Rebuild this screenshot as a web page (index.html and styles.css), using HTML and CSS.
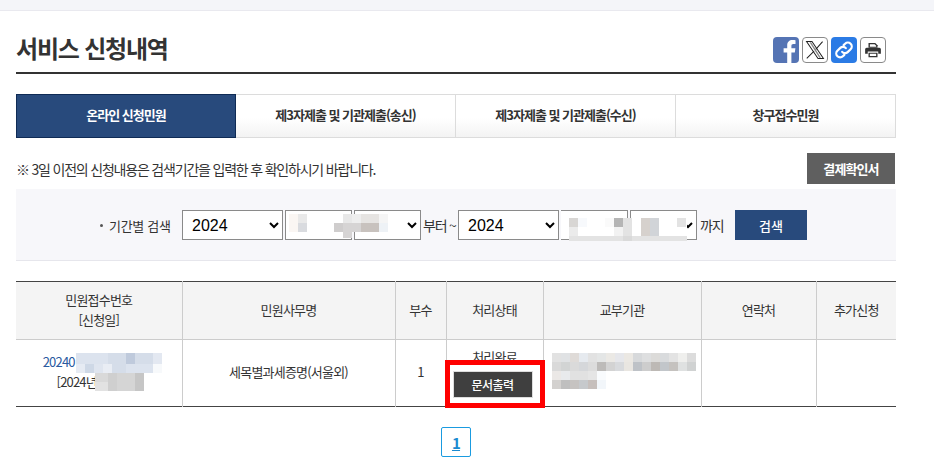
FILE: index.html
```html
<!DOCTYPE html>
<html lang="ko">
<head>
<meta charset="utf-8">
<title>서비스 신청내역</title>
<link rel="stylesheet" href="styles.css">
</head>
<body>
<div class="topstrip"></div>
<main class="page">
  <header class="head">
    <h1 class="title">서비스 신청내역</h1>
    <div class="share">
      <a class="sicon fb"><svg viewBox="0 0 26 26" width="26" height="26"><path d="M14.2 26V15.5h-3.6v-4.2h3.6V8.6c0-3.6 2.1-5.500 5.300-5.500 1.500 0 2.600.1 3 .2v3.700h-2c-1.700 0-2.100.8-2.100 2v2.300h4l-.6 4.200h-3.400V26z" fill="#fff"/></svg></a>
      <a class="sicon plain"><svg viewBox="0 0 24 24" width="22" height="22"><path d="M2.800 2.800h5.900l12.500 18.400h-5.900z" fill="none" stroke="#222" stroke-width="1.100"/><path d="M6 3.500h1.800l10.700 17h-1.800z" fill="#222" opacity=".55"/><path d="M20.300 2.800l-7.500 8.500M11 13.300L3 21.200" stroke="#222" stroke-width="1.100" fill="none"/></svg></a>
      <a class="sicon link"><svg viewBox="0 0 24 24" width="22" height="22" fill="none" stroke="#fff" stroke-width="2.400" stroke-linecap="round"><path d="M10 14a4 4 0 0 0 6 .3l3.200-3.200a4.200 4.200 0 0 0-6-6L11.600 6.700"/><path d="M14 10a4 4 0 0 0-6-.3l-3.200 3.200a4.200 4.200 0 0 0 6 6l1.600-1.600"/></svg></a>
      <a class="sicon plain"><svg viewBox="0 0 24 24" width="18" height="18"><path d="M6 2.500h9l3 3V9H6z" fill="#333"/><path d="M7.800 4.200h6.400l2 2v1.300H7.800z" fill="#fff"/><path d="M3.500 9h17a2 2 0 0 1 2 2v6H19v-3H5v3H1.500v-6a2 2 0 0 1 2-2z" fill="#333"/><path d="M6 15.500h12v6H6z" fill="#333"/><path d="M7.800 17h8.400v3H7.800z" fill="#fff"/></svg></a>
    </div>
  </header>

  <nav class="tabs">
    <a class="tab active">온라인 신청민원</a>
    <a class="tab">제3자제출 및 기관제출(송신)</a>
    <a class="tab">제3자제출 및 기관제출(수신)</a>
    <a class="tab">창구접수민원</a>
  </nav>

  <div class="notice-row">
    <p class="notice">※ 3일 이전의 신청내용은 검색기간을 입력한 후 확인하시기 바랍니다.</p>
    <button class="btn-gray">결제확인서</button>
  </div>

  <form class="search">
    <span class="search-label"><i class="dot"></i>기간별 검색</span>
    <select class="sel sel-year"><option>2024</option></select>
    <select class="sel sel-md"><option></option></select>
    <select class="sel sel-md"><option></option></select>
    <span class="search-text">부터 ~</span>
    <select class="sel sel-year"><option>2024</option></select>
    <select class="sel sel-md"><option></option></select>
    <select class="sel sel-md"><option></option></select>
    <span class="search-text until">까지</span>
    <button type="button" class="btn-search">검색</button>
  </form>

  <table class="grid">
    <colgroup>
      <col class="c1"><col class="c2"><col class="c3"><col class="c4"><col class="c5"><col class="c6"><col class="c7">
    </colgroup>
    <thead>
      <tr><th>민원접수번호<br>[신청일]</th><th>민원사무명</th><th>부수</th><th>처리상태</th><th>교부기관</th><th>연락처</th><th>추가신청</th></tr>
    </thead>
    <tbody>
      <tr>
        <td><a class="num">20240<span class="mask-num"></span></a><br>[2024년<span class="mask-date"></span></td>
        <td>세목별과세증명(서울외)</td>
        <td class="copies">1</td>
        <td class="status"><span class="status-text">처리완료</span><button class="btn-print">문서출력</button></td>
        <td></td><td></td><td></td>
      </tr>
    </tbody>
  </table>

  <div class="pager"><a class="page-on">1</a></div>
</main>

<div class="redbox"></div>

<svg class="mosaic" width="934" height="475" viewBox="0 0 934 475" shape-rendering="crispEdges">
  <!-- start month / day -->
  <rect x="286" y="211" width="65" height="28" fill="#fff"/>
  <rect x="289" y="214" width="9" height="18" fill="#faf6f3"/>
  <rect x="298" y="214" width="9" height="9" fill="#e9e9e9"/><rect x="298" y="223" width="9" height="9" fill="#d9dbdf"/>
  <rect x="334" y="223" width="9" height="9" fill="#cfcdcd"/>
  <rect x="343" y="214" width="9" height="9" fill="#e8e8e8"/><rect x="343" y="223" width="9" height="15" fill="#d6d4d4"/>
  <rect x="352" y="214" width="9" height="9" fill="#eeeeee"/><rect x="352" y="223" width="9" height="9" fill="#d6d4d4"/>
  <rect x="361" y="214" width="18" height="9" fill="#e6e4e2"/><rect x="361" y="223" width="18" height="9" fill="#c8c2be"/>
  <rect x="379" y="214" width="9" height="9" fill="#f5f5f5"/><rect x="379" y="223" width="9" height="9" fill="#eef2f6"/>
  <!-- end month / day -->
  <rect x="561" y="211" width="66" height="28" fill="#fff"/>
  <rect x="631" y="211" width="55" height="28" fill="#fff"/>
  <rect x="569" y="218" width="118" height="23" fill="#fff"/>
  <rect x="569" y="218" width="9" height="9" fill="#d8d6d4"/><rect x="569" y="227" width="9" height="9" fill="#ebebeb"/>
  <rect x="578" y="218" width="9" height="9" fill="#f7f9fc"/>
  <rect x="605" y="218" width="9" height="9" fill="#fafafa"/>
  <rect x="614" y="218" width="9" height="9" fill="#b5b5b5"/><rect x="614" y="227" width="9" height="9" fill="#f2f2f2"/>
  <rect x="623" y="218" width="9" height="18" fill="#e3e3e3"/>
  <rect x="641" y="218" width="9" height="18" fill="#d6d1cd"/>
  <rect x="650" y="218" width="9" height="18" fill="#d1d4d8"/>
  <rect x="677" y="218" width="9" height="9" fill="#e3e3e3"/>
  <rect x="569" y="236" width="118" height="5" fill="#e3e3e3"/>
  <rect x="623" y="236" width="9" height="5" fill="#dadada"/>
  <!-- receipt number -->
  <rect x="76" y="353" width="32" height="11" fill="#dce3ee"/>
  <rect x="108" y="353" width="18" height="11" fill="#d5dde9"/>
  <rect x="126" y="353" width="9" height="11" fill="#bfcadc"/>
  <rect x="135" y="353" width="18" height="11" fill="#d5dde9"/>
  <rect x="153" y="353" width="9" height="11" fill="#e3e8f1"/>
  <rect x="76" y="364" width="9" height="9" fill="#e6ebf3"/>
  <rect x="85" y="364" width="9" height="9" fill="#ced8e6"/>
  <rect x="94" y="364" width="9" height="9" fill="#dfe5ef"/>
  <rect x="103" y="364" width="9" height="9" fill="#e9edf4"/>
  <rect x="112" y="364" width="14" height="9" fill="#d5dde9"/>
  <rect x="126" y="364" width="27" height="9" fill="#dce3ee"/>
  <rect x="153" y="364" width="9" height="9" fill="#f7f9fb"/>
  <!-- date -->
  <rect x="95" y="373" width="13" height="9" fill="#d9d9d9"/><rect x="108" y="373" width="9" height="18" fill="#cfcfcf"/>
  <rect x="95" y="382" width="13" height="9" fill="#e2e2e2"/>
  <rect x="117" y="373" width="18" height="18" fill="#d5d5d5"/>
  <rect x="135" y="373" width="9" height="18" fill="#c6c6c6"/>
  <!-- issuing agency -->
  <rect x="552" y="353" width="9" height="9" fill="#e2e2e2"/><rect x="561" y="353" width="9" height="9" fill="#e0e2e4"/><rect x="570" y="353" width="9" height="9" fill="#dfdbd8"/><rect x="579" y="353" width="9" height="9" fill="#e6eaef"/><rect x="588" y="353" width="9" height="9" fill="#e2e2e2"/><rect x="597" y="353" width="9" height="9" fill="#e4e6e6"/><rect x="606" y="353" width="9" height="9" fill="#ebe9e5"/><rect x="615" y="353" width="9" height="9" fill="#e6e7eb"/><rect x="624" y="353" width="9" height="9" fill="#ebe8e3"/><rect x="633" y="353" width="9" height="9" fill="#d7d9db"/><rect x="642" y="353" width="9" height="9" fill="#dedfe0"/><rect x="651" y="353" width="9" height="9" fill="#dcdbd9"/><rect x="660" y="353" width="9" height="9" fill="#d9dbdd"/><rect x="669" y="353" width="9" height="9" fill="#e3e3e3"/><rect x="678" y="353" width="9" height="9" fill="#efefed"/><rect x="687" y="353" width="9" height="9" fill="#dcdcdc"/>
  <rect x="552" y="362" width="9" height="9" fill="#d9d9d9"/><rect x="561" y="362" width="9" height="9" fill="#d2d4d4"/><rect x="570" y="362" width="9" height="9" fill="#dadada"/><rect x="579" y="362" width="9" height="9" fill="#d5d7da"/><rect x="588" y="362" width="9" height="9" fill="#dcdcdc"/><rect x="597" y="362" width="9" height="9" fill="#bdbbb9"/><rect x="606" y="362" width="9" height="9" fill="#d3d3d3"/><rect x="615" y="362" width="9" height="9" fill="#d8dadd"/><rect x="624" y="362" width="9" height="9" fill="#e9e6e1"/><rect x="633" y="362" width="9" height="9" fill="#bec2c7"/><rect x="642" y="362" width="9" height="9" fill="#cdcdcd"/><rect x="651" y="362" width="9" height="9" fill="#bdb9b5"/><rect x="660" y="362" width="9" height="9" fill="#c2c6ca"/><rect x="669" y="362" width="9" height="9" fill="#c5c2bf"/><rect x="678" y="362" width="9" height="9" fill="#dfe1e1"/><rect x="687" y="362" width="9" height="9" fill="#d0d2d2"/>
  <rect x="552" y="371" width="9" height="9" fill="#ebe8e6"/><rect x="561" y="371" width="9" height="9" fill="#e8eaec"/><rect x="570" y="371" width="18" height="9" fill="#e1e1e1"/><rect x="588" y="371" width="9" height="9" fill="#e5e5e5"/><rect x="597" y="371" width="9" height="9" fill="#f9fbfd"/>
  <rect x="552" y="380" width="9" height="9" fill="#d3d1cf"/><rect x="561" y="380" width="9" height="9" fill="#bfbfbf"/><rect x="570" y="380" width="9" height="9" fill="#c6c3c1"/><rect x="579" y="380" width="9" height="9" fill="#c6c9cc"/><rect x="588" y="380" width="9" height="9" fill="#c6bfbc"/><rect x="597" y="380" width="9" height="9" fill="#f2f6fa"/>
</svg>
</body>
</html>
```

FILE: styles.css
```css
* { box-sizing: border-box; }
html, body { margin: 0; padding: 0; }
body {
  background: #fff;
  color: #333;
  font-family: "Noto Sans CJK KR", "Noto Sans", sans-serif;
  font-size: 13px;
  letter-spacing: -0.8px;
  height: 475px;
  overflow: hidden;
  position: relative;
}
.topstrip { height: 11px; background: #f4f5f9; border-bottom: 1px solid #e9e9ef; }
.page { width: 880px; margin-left: 16px; }

.head {
  height: 63px;
  margin-bottom: -1px;
  display: flex;
  align-items: center;
  justify-content: space-between;
  border-bottom: 2px solid #333;
  padding-right: 10px;
  padding-top: 10px;
}
.title { margin: 0; font-size: 24px; font-weight: 700; letter-spacing: -1.2px; color: #333; line-height: 30px; position: relative; top: 1px; }
.share { display: flex; gap: 3px; position: relative; top: 3px; }
.sicon { width: 26px; height: 26px; border-radius: 4px; display: flex; align-items: center; justify-content: center; overflow: hidden; }
.fb { background: #5574b4; }
.link { background: #2b7be5; }
.plain { background: #fff; border: 1px solid #8a8a8a; }

.tabs { display: flex; margin-top: 21px; height: 44px; }
.tab {
  flex: 0 0 220px;
  display: flex;
  align-items: center;
  justify-content: center;
  font-weight: 700;
  font-size: 13px;
  letter-spacing: -1px;
  color: #333;
  padding-bottom: 3px;
  background: linear-gradient(#fff 55%, #f3f3f3);
  border: 1px solid #dcdcdc;
  border-left: 0;
}
.tab:last-child { border-right: 1px solid #dcdcdc; }
.tab.active { background: #284a7c; color: #fff; border: 1px solid #0f2b55; }

.notice-row { display: flex; justify-content: space-between; align-items: center; height: 31px; margin-top: 15px; padding-right: 1px; }
.notice { margin: 0; font-size: 14px; letter-spacing: -1.2px; color: #333; }
.btn-gray { width: 88px; height: 31px; border: 0; background: #5f5f5f; color: #fff; font: 700 13px "Noto Sans CJK KR", sans-serif; letter-spacing: -0.9px; padding: 0; }

.search {
  margin-top: 5px;
  height: 72px;
  background: #f7f7fa;
  border-bottom: 1px solid #e6e6ec;
  display: flex;
  align-items: center;
  padding-left: 84px;
  padding-top: 1px;
  gap: 2px;
}
.search-label { width: 80px; font-size: 13px; color: #333; display: flex; align-items: center; letter-spacing: -0.3px; }
.dot { width: 3px; height: 3px; background: #555; border-radius: 50%; margin-right: 6px; }
.sel {
  height: 30px;
  border: 1px solid #8a8a8a;
  background: #fff;
  font: 16px "Liberation Sans", sans-serif;
  color: #000;
  letter-spacing: 0;
  padding-left: 5px;
  border-radius: 0;
}
.sel-year { width: 101px; }
.sel-md { width: 67px; }
.search-text { font-size: 14px; letter-spacing: -1.2px; width: 33px; white-space: nowrap; color: #333; }
.until { width: 30px; margin-left: 1px; }
.btn-search { width: 72px; height: 30px; border: 0; margin-left: 3px; background: #284a7c; color: #fff; font: 500 13px "Noto Sans CJK KR", sans-serif; padding: 0; }

.grid { width: 880px; margin-top: 20px; border-collapse: collapse; table-layout: fixed; border-top: 1px solid #444; border-bottom: 1px solid #444; }
.c1 { width: 166px; } .c2 { width: 213px; } .c3 { width: 51px; } .c4 { width: 97px; } .c5 { width: 158px; } .c6 { width: 115px; } .c7 { width: 80px; }
.grid th, .grid td { border-left: 1px solid #ccc; text-align: center; vertical-align: middle; padding: 0 0 2px; line-height: 20px; font-size: 13px; }
.grid th:first-child, .grid td:first-child { border-left: 0; }
.grid th { height: 58px; background: #f4f4f4; font-weight: 400; border-bottom: 1px solid #ccc; color: #333; }
.grid td { height: 67px; color: #333; }
.num { color: #2a5a9f; }
.mask-num { display: inline-block; width: 80px; }
.mask-date { display: inline-block; width: 44px; }
.copies { font-size: 14px; }
.grid .status { vertical-align: top; padding: 8px 0 0; }
.status-text { display: block; line-height: 18px; }
.btn-print { display: block; margin: 5px 0 0 6px; width: 80px; height: 27px; background: #3f3f3f; border: 1px solid #ddd; color: #fff; font: 500 12px "Noto Sans CJK KR", sans-serif; letter-spacing: -0.6px; padding: 0; }

.pager { display: flex; justify-content: center; margin-top: 20px; }
.page-on { width: 30px; height: 30px; border: 1px solid #1a9be0; border-radius: 2px; display: flex; align-items: center; justify-content: center; color: #1a8ad0; font-weight: 700; font-size: 15px; text-decoration: underline; }

.redbox { position: absolute; left: 445px; top: 360px; width: 100px; height: 48px; border: 5px solid #f00; }
.mosaic { position: absolute; left: 0; top: 0; pointer-events: none; }
```
